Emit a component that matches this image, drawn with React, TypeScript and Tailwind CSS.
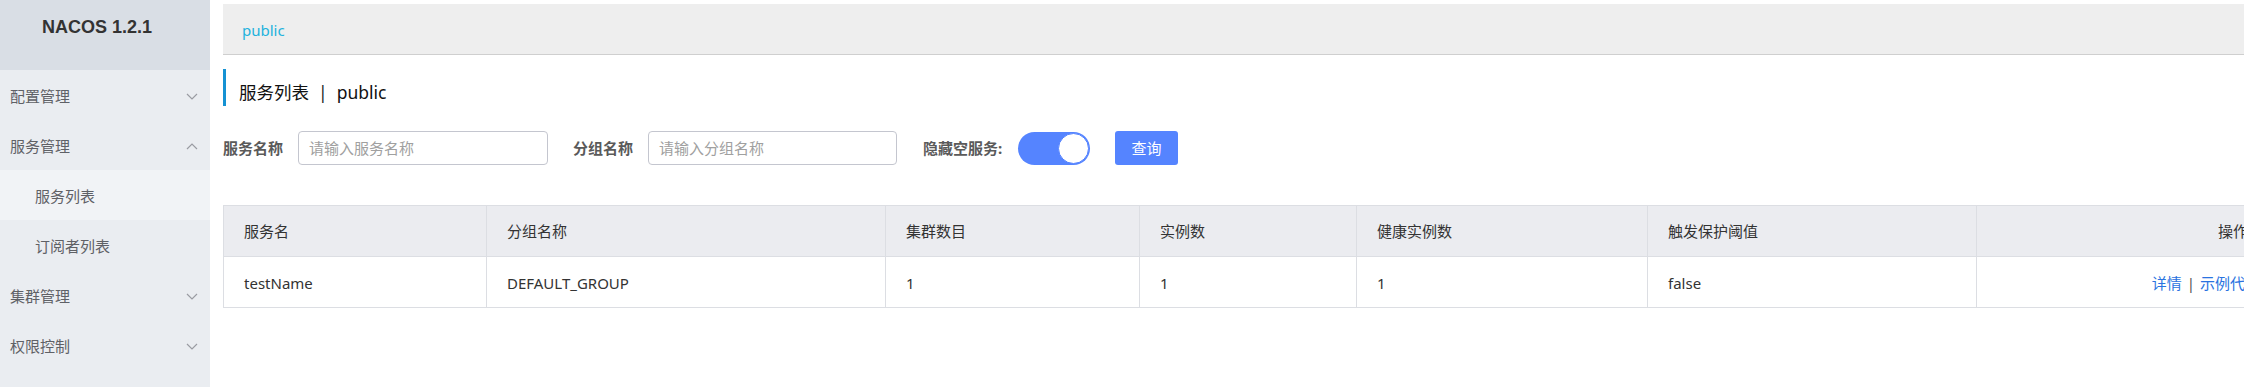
import React from "react";

const Chevron = ({ up = false }: { up?: boolean }) => (
  <svg width="12" height="7" viewBox="0 0 12 7" className="shrink-0">
    <polyline
      points={up ? "1,6 6,1 11,6" : "1,1 6,6 11,1"}
      fill="none"
      stroke="#9a9ca3"
      strokeWidth="1.2"
    />
  </svg>
);

const MenuItem = ({ label, up, arrow = true }: { label: string; up?: boolean; arrow?: boolean }) => (
  <div className="h-[50px] flex items-center justify-between pl-[10px] pr-[12px] pt-[3px] text-[15px] text-[#5f6166]">
    <span>{label}</span>
    {arrow && <Chevron up={up} />}
  </div>
);

const cols = [263, 399, 254, 217, 291, 329, 304];

export default function App() {
  const font = { fontFamily: '"Noto Sans", "Noto Sans CJK SC", sans-serif' };
  return (
    <div className="flex w-[2244px] h-[388px] overflow-hidden bg-white" style={font}>
      {/* Sidebar */}
      <div className="w-[210px] shrink-0 h-[387px] bg-[#eaedf1] flex flex-col">
        <div className="h-[70px] bg-[#d9dee5] pl-[42px] pt-[14px]">
          <span
            className="text-[18px] font-bold text-[#333333] leading-[26px]"
            style={{ fontFamily: '"Liberation Sans", Arial, sans-serif' }}
          >
            NACOS 1.2.1
          </span>
        </div>
        <MenuItem label="配置管理" />
        <MenuItem label="服务管理" up />
        <div className="h-[50px] flex items-center pl-[35px] pt-[3px] text-[15px] text-[#5f6166] bg-[#f1f3f6]">
          服务列表
        </div>
        <div className="h-[50px] flex items-center pl-[35px] pt-[3px] text-[15px] text-[#5f6166]">订阅者列表</div>
        <MenuItem label="集群管理" />
        <MenuItem label="权限控制" />
      </div>

      {/* Main */}
      <div className="flex-1 min-w-0 pl-[13px] pt-[4px] overflow-hidden">
        <div className="h-[51px] bg-[#eeeeee] border-b border-[#cfcfcf] flex items-center pl-[19px] pt-[3px] text-[15px] text-[#22b2dd]">
          public
        </div>

        <div className="mt-[14px] h-[37px] border-l-[3px] border-[#1592d3] pl-[13px] pt-[9px] flex items-center text-[17.5px] text-[#111111]">
          <span>服务列表</span>
          <span className="mx-[9px] text-[#222]">|</span>
          <span>public</span>
        </div>

        <div className="mt-[25px] h-[34px] flex items-center text-[15px]">
          <span className="font-bold text-[#5a5a5a] w-[60px] whitespace-nowrap">服务名称</span>
          <div className="ml-[15px] w-[250px] h-[34px] border border-[#c4c6cf] rounded-[4px] flex items-center pl-[10px] text-[#a0a0a0]">
            请输入服务名称
          </div>
          <span className="ml-[25px] font-bold text-[#5a5a5a] w-[60px] whitespace-nowrap">分组名称</span>
          <div className="ml-[15px] w-[249px] h-[34px] border border-[#c4c6cf] rounded-[4px] flex items-center pl-[10px] text-[#a0a0a0]">
            请输入分组名称
          </div>
          <span className="ml-[26px] font-bold text-[#5a5a5a] w-[80px] whitespace-nowrap">隐藏空服务:</span>
          <div className="ml-[15px] w-[72px] h-[33px] rounded-full bg-[#5584ff] flex items-center justify-end pr-[1px]">
            <div className="w-[31px] h-[31px] rounded-full bg-white border border-[#5584ff]" />
          </div>
          <div className="ml-[25px] w-[63px] h-[34px] rounded-[3px] bg-[#5584ff] text-white flex items-center justify-center">
            查询
          </div>
        </div>

        <table className="mt-[40px] border-collapse table-fixed text-[15px] text-[#333333]" style={{ width: 2057 }}>
          <colgroup>
            {cols.map((w, i) => (
              <col key={i} style={{ width: w }} />
            ))}
          </colgroup>
          <thead>
            <tr className="bg-[#ebecf0]">
              <th className="h-[51px] border border-[#dcdee3] pl-[20px] text-left font-normal">服务名</th>
              <th className="h-[51px] border border-[#dcdee3] pl-[20px] text-left font-normal">分组名称</th>
              <th className="h-[51px] border border-[#dcdee3] pl-[20px] text-left font-normal">集群数目</th>
              <th className="h-[51px] border border-[#dcdee3] pl-[20px] text-left font-normal">实例数</th>
              <th className="h-[51px] border border-[#dcdee3] pl-[20px] text-left font-normal">健康实例数</th>
              <th className="h-[51px] border border-[#dcdee3] pl-[20px] text-left font-normal">触发保护阈值</th>
              <th className="h-[51px] border border-[#dcdee3] pr-[32px] text-right font-normal">操作</th>
            </tr>
          </thead>
          <tbody>
            <tr>
              <td className="h-[51px] border border-[#dcdee3] pl-[20px] pt-[2px]">testName</td>
              <td className="h-[51px] border border-[#dcdee3] pl-[20px] pt-[2px]">DEFAULT_GROUP</td>
              <td className="h-[51px] border border-[#dcdee3] pl-[20px] pt-[2px]">1</td>
              <td className="h-[51px] border border-[#dcdee3] pl-[20px] pt-[2px]">1</td>
              <td className="h-[51px] border border-[#dcdee3] pl-[20px] pt-[2px]">1</td>
              <td className="h-[51px] border border-[#dcdee3] pl-[20px] pt-[2px]">false</td>
              <td className="h-[51px] border border-[#dcdee3] pr-[20px] pt-[2px] text-right whitespace-nowrap">
                <span className="text-[#2a73e0]">详情</span>
                <span className="mx-[5px] text-[#555]">|</span>
                <span className="text-[#2a73e0]">示例代码</span>
              </td>
            </tr>
          </tbody>
        </table>
      </div>
    </div>
  );
}
